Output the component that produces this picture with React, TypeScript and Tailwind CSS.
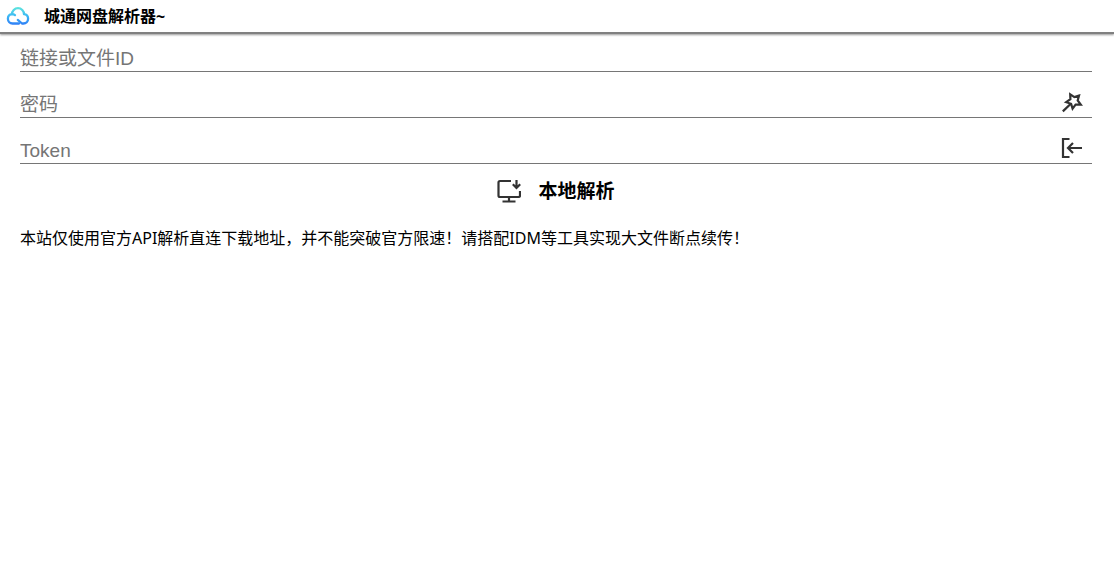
import { useState } from "react";
import type { ReactNode } from "react";

function CloudLogo() {
  return (
    <svg viewBox="0 0 24 24" className="size-6" fill="none" aria-hidden="true">
      <defs>
        <linearGradient id="cloud" x1="12" y1="3" x2="12" y2="21" gradientUnits="userSpaceOnUse">
          <stop offset="0" stopColor="#5fe6dc" />
          <stop offset="0.5" stopColor="#3cb8f5" />
          <stop offset="1" stopColor="#2f7cf6" />
        </linearGradient>
      </defs>
      <g stroke="url(#cloud)" strokeWidth="2.3" strokeLinecap="round" strokeLinejoin="round">
        <path d="M6 10.2C6 6.9 8.6 4.2 12 4.2s6 2.7 6 6c2.4.3 4.1 2.2 4.1 4.6 0 2.6-2.1 4.7-4.7 4.7h-1.400l-4.200-3.600" />
        <path d="M6 10.2C3.6 10.5 1.9 12.4 1.900 14.8c0 2.6 2.1 4.7 4.7 4.7h6.400" />
        <path d="M6 10.2c1.200 0 2.200.3 3 .9" />
      </g>
    </svg>
  );
}

function WandIcon() {
  return (
    <svg viewBox="0 0 24 24" className="size-6" fill="none" stroke="#333" strokeWidth="2.2" strokeLinejoin="miter" aria-hidden="true">
      <path d="M2.8 21.4L10.8 13.8" />
      <path d="M19 5.6L14.400 7.1 10.200 4.300 10.400 9.200 6.200 12.200l4.900 1.600 1.500 4.800 3-4 5.200 0-3.100-4.200z" />
    </svg>
  );
}

function ImportIcon() {
  return (
    <svg viewBox="0 0 24 24" className="size-6" fill="none" stroke="#333" strokeWidth="2.2" aria-hidden="true">
      <path d="M9.5 3H3v18h6.500" />
      <path d="M22 12H8M13 7l-5 5 5 5" />
    </svg>
  );
}

function MonitorIcon() {
  return (
    <svg viewBox="0 0 24 24" className="size-6" fill="none" stroke="#333" strokeWidth="2.2" aria-hidden="true">
      <path d="M14 2H3a1.5 1.5 0 0 0-1.500 1.500v13A1.500 1.500 0 0 0 3 18h18.500a1.500 1.500 0 0 0 1.500-1.500V12" />
      <path d="M12 18v4.500M5.500 22.500h13" />
      <path d="M19.500 1v8M15.800 5.300l3.700 3.700 3.700-3.700" />
    </svg>
  );
}

type FieldProps = {
  id: string;
  label: string;
  value: string;
  onChange: (value: string) => void;
  children?: ReactNode;
};

function Field({ id, label, value, onChange, children }: FieldProps) {
  return (
    <div className="flex h-9 items-end border-b border-[#767676] pr-2">
      <input
        id={id}
        type="text"
        aria-label={label}
        placeholder={label}
        value={value}
        onChange={(e) => onChange(e.target.value)}
        className="h-6 min-w-0 flex-1 bg-transparent font-['Liberation_Sans','Noto_Sans_CJK_SC',sans-serif] text-[19px] leading-6 outline-none placeholder:text-[#757575]"
      />
      {children}
    </div>
  );
}

export default function App() {
  const [link, setLink] = useState("");
  const [password, setPassword] = useState("");
  const [token, setToken] = useState("");

  return (
    <div className="min-h-screen bg-white font-['Noto_Sans','Noto_Sans_CJK_SC',sans-serif] text-base text-black">
      <header className="flex h-[34px] items-center gap-3.5 border-b-2 border-[#808080] px-1.5 shadow-[0_1px_2px_#999]">
        <CloudLogo />
        <h1 className="font-bold">城通网盘解析器~</h1>
      </header>

      <main className="pt-0.5 pr-[22px] pl-5">
        <form className="flex flex-col gap-2.5" onSubmit={(e) => e.preventDefault()}>
          <Field id="link" label="链接或文件ID" value={link} onChange={setLink} />
          <Field id="password" label="密码" value={password} onChange={setPassword}>
            <button type="button" aria-label="自动填写密码" className="pb-[3px]" onClick={() => setPassword("")}>
              <WandIcon />
            </button>
          </Field>
          <Field id="token" label="Token" value={token} onChange={setToken}>
            <button type="button" aria-label="导入Token" className="pb-[3px]" onClick={() => setToken("")}>
              <ImportIcon />
            </button>
          </Field>
          <button type="submit" className="flex items-center gap-[17px] self-center pt-[3px] text-[19px] font-bold">
            <MonitorIcon />
            本地解析
          </button>
        </form>

        <p className="mt-5">
          本站仅使用官方API解析直连下载地址，并不能突破官方限速！请搭配IDM等工具实现大文件断点续传！
        </p>
      </main>
    </div>
  );
}
